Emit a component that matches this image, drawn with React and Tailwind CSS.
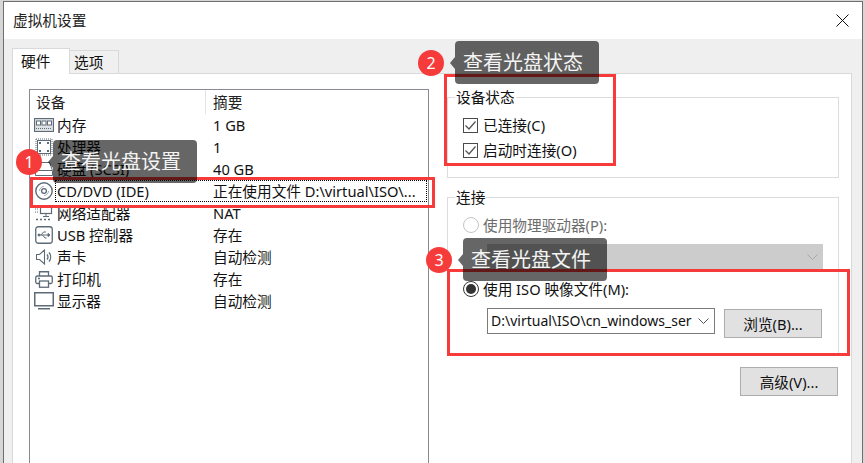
import React from "react";

const FONT = "font-['Noto_Sans','Noto_Sans_CJK_SC',sans-serif]";

const MemoryIcon = () => (
  <svg width="20" height="14" viewBox="0 0 20 14" fill="none" stroke="#5c6b77">
    <rect x="0.5" y="0.5" width="19" height="13" fill="#dfe3e6" strokeWidth="1.2" />
    <rect x="2.5" y="3" width="4" height="4" fill="#fff" />
    <rect x="8" y="3" width="4" height="4" fill="#fff" />
    <rect x="13.5" y="3" width="4" height="4" fill="#fff" />
    <path d="M2 10.5h16" strokeDasharray="1 1" />
  </svg>
);

const CpuIcon = () => (
  <svg width="18" height="18" viewBox="0 0 18 18" fill="none" stroke="#5c6b77">
    <rect x="2.5" y="2.5" width="13" height="13" fill="#fff" />
    <path d="M1 1h16M1 17h16M1 1v16M17 1v16" strokeDasharray="1 1" />
    <rect x="4" y="4" width="2" height="2" fill="#5c6b77" stroke="none" />
    <rect x="12" y="4" width="2" height="2" fill="#5c6b77" stroke="none" />
    <rect x="4" y="12" width="2" height="2" fill="#5c6b77" stroke="none" />
    <rect x="12" y="12" width="2" height="2" fill="#5c6b77" stroke="none" />
  </svg>
);

const DiskIcon = () => (
  <svg width="18" height="14" viewBox="0 0 18 14" fill="none" stroke="#5c6b77">
    <path d="M3.5 0.5h11l3 8v5h-17v-5z" fill="#fff" />
    <path d="M1 8.5h16" />
  </svg>
);

const CdIcon = () => (
  <svg width="18" height="18" viewBox="0 0 18 18" fill="none" stroke="#5c6b77">
    <circle cx="9" cy="9" r="8.2" strokeWidth="1.4" />
    <circle cx="9" cy="9" r="2.4" strokeWidth="1.3" />
    <path d="M4.500 9a4.500 4.500 0 0 1 4.500-4.500M13.500 9a4.500 4.500 0 0 1-4.500 4.500" stroke="#a3adb5" />
  </svg>
);

const NetworkIcon = () => (
  <svg width="18" height="16" viewBox="0 0 18 16" fill="none" stroke="#5c6b77">
    <rect x="5.5" y="0.5" width="11" height="8" fill="#fff" strokeWidth="1.2" />
    <path d="M11 9v2M8 11.5h6" />
    <path d="M0 1h4M0 4h3M0 7h3" strokeDasharray="1 1" />
    <path d="M1 14.5h16" strokeDasharray="2 2" strokeWidth="1.5" />
  </svg>
);

const UsbIcon = () => (
  <svg width="18" height="18" viewBox="0 0 18 18" fill="none" stroke="#5c6b77">
    <rect x="0.75" y="0.75" width="16.5" height="16.5" rx="2.5" strokeWidth="1.3" />
    <path d="M3.5 9h10M6 9l2.500-3h2.500M7.500 9l2.500 3h1.500" />
    <path d="M13 7.500l2 1.500-2 1.500z" fill="#5c6b77" />
    <circle cx="4" cy="9" r="1" fill="#5c6b77" />
  </svg>
);

const SpeakerIcon = () => (
  <svg width="16" height="16" viewBox="0 0 16 16" fill="none" stroke="#5c6b77">
    <path d="M0.5 5.500h3l5-4.500v14l-5-4.500h-3z" strokeWidth="1.1" />
    <path d="M11 5.500a4 4 0 0 1 0 5M13 3.500a7 7 0 0 1 0 9" strokeWidth="1.3" />
  </svg>
);

const PrinterIcon = () => (
  <svg width="18" height="17" viewBox="0 0 18 17" fill="none" stroke="#5c6b77" strokeWidth="1.3">
    <path d="M4.500 5V0.750h9V5" />
    <rect x="0.750" y="5" width="16.500" height="7.500" rx="1.500" />
    <rect x="4.500" y="10" width="9" height="6.250" fill="#fff" />
    <path d="M3 7.500h2" />
  </svg>
);

const MonitorIcon = () => (
  <svg width="20" height="18" viewBox="0 0 20 18" fill="none" stroke="#5c6b77">
    <rect x="0.750" y="0.750" width="18.500" height="13" strokeWidth="1.500" />
    <path d="M4 16.750h12" strokeWidth="1.500" />
  </svg>
);

const devices = [
  { icon: <MemoryIcon />, name: "内存", summary: "1 GB" },
  { icon: <CpuIcon />, name: "处理器", summary: "1" },
  { icon: <DiskIcon />, name: "硬盘 (SCSI)", summary: "40 GB" },
  { icon: <CdIcon />, name: "CD/DVD (IDE)", summary: "正在使用文件 D:\\virtual\\ISO\\...", selected: true },
  { icon: <NetworkIcon />, name: "网络适配器", summary: "NAT" },
  { icon: <UsbIcon />, name: "USB 控制器", summary: "存在" },
  { icon: <SpeakerIcon />, name: "声卡", summary: "自动检测" },
  { icon: <PrinterIcon />, name: "打印机", summary: "存在" },
  { icon: <MonitorIcon />, name: "显示器", summary: "自动检测" },
];

const Chevron = ({ color }) => (
  <svg width="11" height="6" viewBox="0 0 11 6" fill="none" stroke={color}>
    <path d="M0.500 0.500l5 5 5-5" />
  </svg>
);

const CheckRow = ({ label }) => (
  <div className="flex items-center h-[25px]">
    <span className="w-[15px] h-[15px] border border-[#4a4a4a] flex items-center justify-center">
      <svg width="11" height="9" viewBox="0 0 11 9" fill="none" stroke="#555" strokeWidth="1.300">
        <path d="M0.500 4.500l3.500 3.500 6.500-7.500" />
      </svg>
    </span>
    <span className="ml-[5px] pb-[1px]">{label}</span>
  </div>
);

const Radio = ({ checked }) =>
  checked ? (
    <span className="w-[16px] h-[16px] rounded-full border border-[#333] flex items-center justify-center">
      <span className="w-[10px] h-[10px] rounded-full bg-[#333]" />
    </span>
  ) : (
    <span className="w-[16px] h-[16px] rounded-full border border-[#c4c4c4]" />
  );

const WinButton = ({ children, className }) => (
  <button className={`h-[29px] w-[98px] bg-[#e1e1e1] border border-[#adadad] flex items-center justify-center ${className}`}>
    {children}
  </button>
);

const Group = ({ title, className, children }) => (
  <div className={`relative border border-[#dcdcdc] ${className}`}>
    <span className="absolute left-[7px] -top-[11px] bg-white px-[1px] leading-[20px]">{title}</span>
    {children}
  </div>
);

// 标注气泡:红色序号 + 半透明提示
const Callout = ({ num, text, className }) => (
  <div className={`absolute flex items-center ${className}`}>
    <span className="w-[26px] h-[26px] rounded-full bg-[#f63b3b] text-white text-[16px] flex items-center justify-center">
      {num}
    </span>
    <span className="ml-[6px] w-0 h-0 border-y-[6px] border-y-transparent border-r-[5px] border-r-black/60" />
    <span className="w-[144px] h-[43px] rounded-[4px] bg-black/60 text-[#f4f4f4] text-[20px] pl-[8px] flex items-center">
      {text}
    </span>
  </div>
);

const App = () => {
  return (
    <div className={`relative w-[865px] h-[463px] overflow-hidden flex pl-[3px] pr-[2px] pt-[1px] bg-[#d6d6d6] text-[14.67px] text-[#111] ${FONT}`}>
      <div className="flex-1 flex flex-col border-x border-t border-[#6e6e6e] bg-[#efefef]">
        {/* 标题栏 */}
        <div className="h-[37px] shrink-0 bg-white flex items-center justify-between pl-[9px] pr-[13px] text-[#222]">
          <span className="pb-[2px]">虚拟机设置</span>
          <svg width="13" height="13" viewBox="0 0 13 13" stroke="#111">
            <path d="M0.500 0.500l12 12M12.500 0.500l-12 12" />
          </svg>
        </div>

        <div className="flex-1 min-h-0 flex flex-col pl-[8px] pr-[10px] pt-[9px]">
          {/* 选项卡 */}
          <div className="flex items-end h-[25px] shrink-0 relative z-10">
            <div className="w-[58px] h-[26px] -mb-[1px] bg-white border-x border-t border-[#d9d9d9] pl-[8px] pb-[2px] flex items-center">硬件</div>
            <div className="w-[49px] h-[23px] bg-[#f0f0f0] border-r border-t border-[#d9d9d9] pl-[4px] flex items-center">选项</div>
          </div>

          <div className="flex-1 min-h-0 bg-white border-x border-t border-[#d9d9d9] flex pl-[16px] pt-[15px] gap-[18px]">
            {/* 设备列表 */}
            <div className="w-[400px] shrink-0 border-x border-t border-[#8a8a95] overflow-hidden">
              <div className="flex h-[24px] items-center text-[#222]">
                <span className="w-[176px] pl-[6px] h-full flex items-center border-r border-[#e4e4e4]">设备</span>
                <span className="pl-[7px]">摘要</span>
              </div>
              {devices.map((d) => (
                <div key={d.name} className="flex h-[22px] items-center">
                  <span className="w-[25px] shrink-0 flex justify-center pl-[3px]">{d.icon}</span>
                  <span className={`flex flex-1 h-full items-center mr-[1px] border border-dotted pb-[1px] ${d.selected ? "border-black" : "border-transparent"}`}>
                    <span className="w-[157px] pl-[1px] whitespace-nowrap">{d.name}</span>
                    <span className="whitespace-nowrap">{d.summary}</span>
                  </span>
                </div>
              ))}
            </div>

            {/* 右侧设置 */}
            <div className="w-[392px] shrink-0 flex flex-col pt-[8px]">
              <Group title="设备状态" className="h-[81px] pl-[15px] pt-[15px]">
                <CheckRow label="已连接(C)" />
                <CheckRow label="启动时连接(O)" />
              </Group>

              <Group title="连接" className="h-[159px] mt-[19px] pl-[15px] pr-[15px] pt-[16px]">
                <div className="flex items-center h-[22px] text-[#6d6d6d]">
                  <Radio />
                  <span className="ml-[4px] pb-[1px]">使用物理驱动器(P):</span>
                </div>
                <div className="ml-[24px] mt-[8px] h-[26px] bg-[#cccccc] flex items-center justify-end pr-[5px]">
                  <Chevron color="#a8a8a8" />
                </div>
                <div className="flex items-center h-[22px] mt-[8px]">
                  <Radio checked />
                  <span className="ml-[4px] pb-[1px]">使用 ISO 映像文件(M):</span>
                </div>
                <div className="flex items-start ml-[24px] mt-[8px] gap-[9px]">
                  <div className="w-[228px] h-[26px] border border-[#7a7a7a] flex items-center pl-[3px] pr-[5px] justify-between text-[14px]">
                    <span className="whitespace-nowrap pb-[1px]">D:\virtual\ISO\cn_windows_ser</span>
                    <Chevron color="#555" />
                  </div>
                  <WinButton className="mt-[1px]">浏览(B)...</WinButton>
                </div>
              </Group>

              <div className="flex justify-end mt-[11px] pr-[1px]">
                <WinButton>高级(V)...</WinButton>
              </div>
            </div>
          </div>
        </div>
      </div>

      {/* 标注层 */}
      <div className="absolute left-[30px] top-[177px] w-[405px] h-[31px] border-[3px] border-[#f73b3b]" />
      <div className="absolute left-[444px] top-[74px] w-[172px] h-[92px] border-[3px] border-[#f73b3b]" />
      <div className="absolute left-[447px] top-[269px] w-[403px] h-[87px] border-[3px] border-[#f73b3b]" />
      <Callout num="1" text="查看光盘设置" className="left-[16px] top-[140px]" />
      <Callout num="2" text="查看光盘状态" className="left-[418px] top-[41px]" />
      <Callout num="3" text="查看光盘文件" className="left-[426px] top-[238px]" />
    </div>
  );
};

export default App;
